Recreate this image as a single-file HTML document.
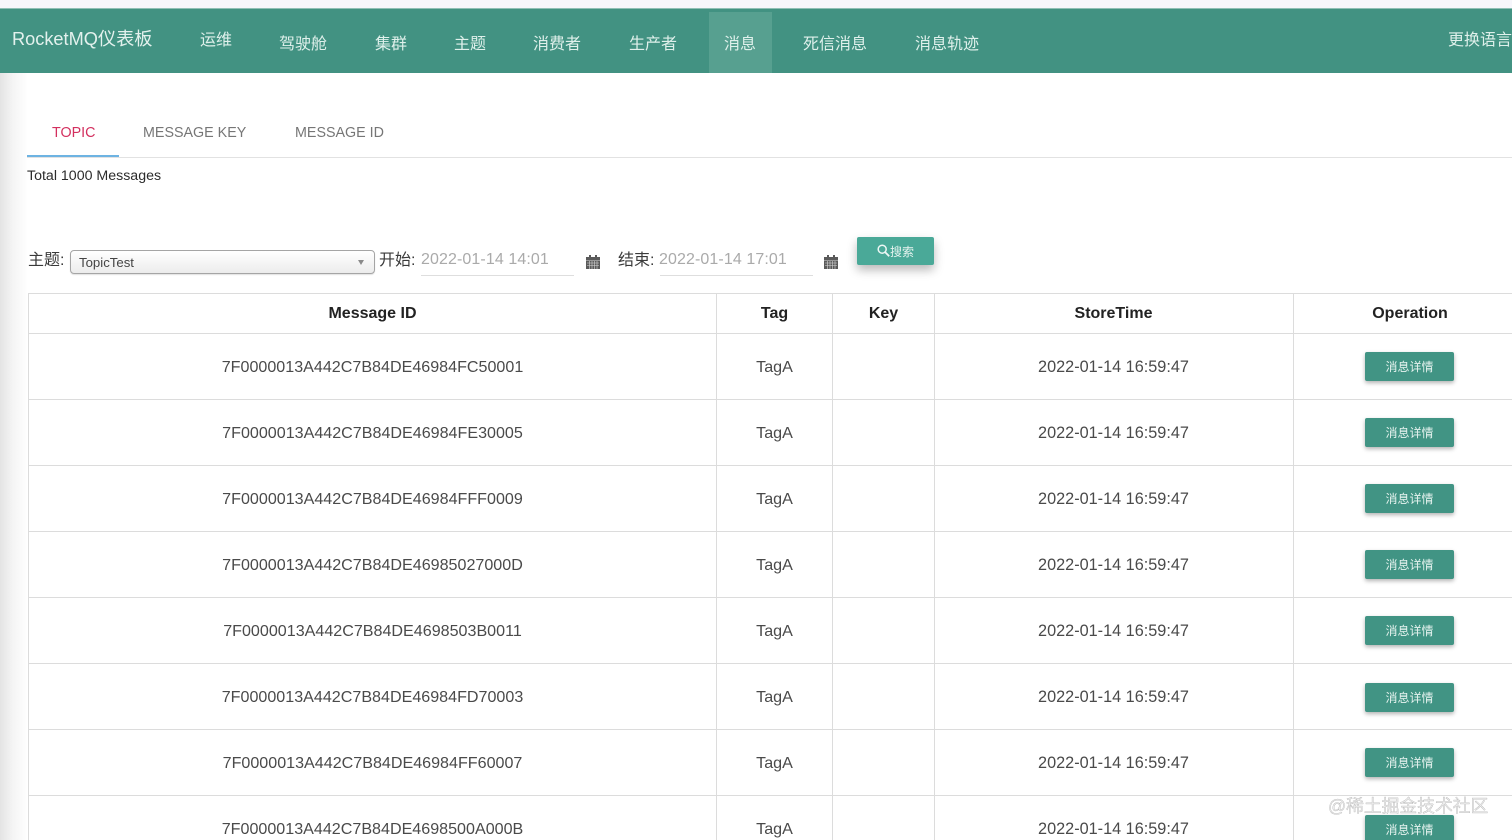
<!DOCTYPE html>
<html lang="zh">
<head>
<meta charset="utf-8">
<title>RocketMQ</title>
<style>
*{box-sizing:border-box}
html,body{margin:0;padding:0;width:1512px;height:840px;overflow:hidden;background:#fff}
body{font-family:"Liberation Sans","Noto Sans CJK SC",sans-serif;color:#333;position:relative}
.a{position:absolute;white-space:nowrap}
.c{position:absolute;white-space:nowrap;transform:translate(-50%,-50%);line-height:1}
.nav{font-size:16px;color:#dff0eb;line-height:1;transform:translateY(-50%)}
.h{font-size:16px;font-weight:bold;color:#222}
.t{font-size:16.1px;color:#4a4a4a}
.d{font-size:16.25px;color:#4a4a4a}
.hl{position:absolute;left:28px;width:1484px;height:1px;background:#dcdcdc}
.vl{position:absolute;top:293px;height:547px;width:1px;background:#dcdcdc}
.b{position:absolute;left:1365px;width:89px;height:29px;background:#419484;border-radius:2px;color:#e6f3ef;font-size:12px;text-align:center;line-height:31px;box-shadow:0 2px 4px rgba(0,0,0,.3)}
.tab{font-size:14.3px;color:#767676;line-height:1}
</style>
</head>
<body>
<div class="a" style="left:0;top:0;width:1512px;height:8px;background:#f6f6fb"></div>
<div class="a" style="left:0;top:8px;width:1512px;height:65px;background:#429282;border-top:1px solid #8fbfb5"></div>
<div class="a" style="left:709px;top:12px;width:63px;height:61px;background:#57a090"></div>

<div class="a" style="left:12px;top:28px;font-size:18.2px;line-height:22px;color:#e3f1ed">RocketMQ仪表板</div>
<div class="a nav" style="left:200px;top:41px">运维</div>
<div class="a nav" style="left:279px;top:45px">驾驶舱</div>
<div class="a nav" style="left:375px;top:45px">集群</div>
<div class="a nav" style="left:454px;top:45px">主题</div>
<div class="a nav" style="left:533px;top:45px">消费者</div>
<div class="a nav" style="left:629px;top:45px">生产者</div>
<div class="a nav" style="left:724px;top:45px">消息</div>
<div class="a nav" style="left:803px;top:45px">死信消息</div>
<div class="a nav" style="left:915px;top:45px">消息轨迹</div>
<div class="a nav" style="left:1448px;top:41px">更换语言</div>

<div class="a" style="left:0;top:73px;width:28px;height:767px;background:linear-gradient(90deg,#e4e4e4,#f4f4f4 45%,#fff)"></div>

<div class="a tab" style="left:52px;top:126px;color:#d3305f">TOPIC</div>
<div class="a tab" style="left:143px;top:126px">MESSAGE KEY</div>
<div class="a tab" style="left:295px;top:126px">MESSAGE ID</div>
<div class="a" style="left:27px;top:157px;width:1485px;height:1px;background:#e2e2e2"></div>
<div class="a" style="left:27px;top:155px;width:92px;height:2px;background:#6db3e2"></div>
<div class="a" style="left:27px;top:168px;font-size:14.2px;line-height:16px;color:#2b2b2b">Total 1000 Messages</div>

<div class="a" style="left:28px;top:252px;font-size:16px;line-height:18px;color:#3a3a3a">主题:</div>
<div class="a" style="left:70px;top:250px;width:305px;height:24px;border:1px solid #a5a5a5;border-radius:4px;background:linear-gradient(#fff,#ececec);font-size:13.2px;line-height:23px;padding-left:8px;color:#444;box-shadow:0 1px 1px rgba(0,0,0,.12)">TopicTest</div>
<div class="a" style="left:358px;top:260px;width:0;height:0;border-left:3px solid transparent;border-right:3px solid transparent;border-top:5px solid #8a8a8a"></div>
<div class="a" style="left:379px;top:252px;font-size:16px;line-height:18px;color:#3a3a3a">开始:</div>
<div class="a" style="left:421px;top:251px;font-size:16px;line-height:18px;color:#aaa;letter-spacing:.1px">2022-01-14 14:01</div>
<div class="a" style="left:421px;top:275px;width:153px;height:1px;background:#dedede"></div>
<svg class="a" style="left:586px;top:254px" width="14" height="15" viewBox="0 0 14 15"><path fill="#5a5a5a" d="M0 3h14v12H0zM3 1h2v3H3zM9 1h2v3H9z"/><path stroke="#d8d8d8" stroke-width=".6" d="M0 6.500h14M1 9h12M1 11.500h12M3.500 7v8M6 7v8M8.500 7v8M11 7v8"/></svg>
<div class="a" style="left:618px;top:252px;font-size:16px;line-height:18px;color:#3a3a3a">结束:</div>
<div class="a" style="left:659px;top:251px;font-size:16px;line-height:18px;color:#aaa;letter-spacing:.1px">2022-01-14 17:01</div>
<div class="a" style="left:660px;top:275px;width:153px;height:1px;background:#dedede"></div>
<svg class="a" style="left:824px;top:254px" width="14" height="15" viewBox="0 0 14 15"><path fill="#5a5a5a" d="M0 3h14v12H0zM3 1h2v3H3zM9 1h2v3H9z"/><path stroke="#d8d8d8" stroke-width=".6" d="M0 6.500h14M1 9h12M1 11.500h12M3.500 7v8M6 7v8M8.500 7v8M11 7v8"/></svg>
<div class="a" style="left:857px;top:237px;width:77px;height:28px;background:#4aa998;border-radius:2px;box-shadow:0 5px 10px rgba(0,0,0,.28)"></div>
<svg class="a" style="left:877px;top:244px" width="13" height="13" viewBox="0 0 13 13"><circle cx="5.200" cy="5.200" r="4" fill="none" stroke="#eef7f5" stroke-width="1.500"/><path d="M8.200 8.200l4 4" stroke="#eef7f5" stroke-width="1.800"/></svg>
<div class="a" style="left:890px;top:245px;font-size:12px;line-height:15px;color:#e6f3ef">搜索</div>

<div class="hl" style="top:293px"></div>
<div class="hl" style="top:333px"></div>
<div class="hl" style="top:399px"></div>
<div class="hl" style="top:465px"></div>
<div class="hl" style="top:531px"></div>
<div class="hl" style="top:597px"></div>
<div class="hl" style="top:663px"></div>
<div class="hl" style="top:729px"></div>
<div class="hl" style="top:795px"></div>
<div class="vl" style="left:28px"></div>
<div class="vl" style="left:716px"></div>
<div class="vl" style="left:832px"></div>
<div class="vl" style="left:934px"></div>
<div class="vl" style="left:1293px"></div>

<div class="c h" style="left:372.500px;top:314px">Message ID</div>
<div class="c h" style="left:774.500px;top:314px">Tag</div>
<div class="c h" style="left:883.500px;top:314px">Key</div>
<div class="c h" style="left:1113.500px;top:314px">StoreTime</div>
<div class="c h" style="left:1410px;top:314px">Operation</div>

<div class="c t" style="left:372.500px;top:367px">7F0000013A442C7B84DE46984FC50001</div>
<div class="c t" style="left:774.500px;top:367px">TagA</div>
<div class="c d" style="left:1113.500px;top:367px">2022-01-14 16:59:47</div>
<div class="b" style="top:352px">消息详情</div>

<div class="c t" style="left:372.500px;top:433px">7F0000013A442C7B84DE46984FE30005</div>
<div class="c t" style="left:774.500px;top:433px">TagA</div>
<div class="c d" style="left:1113.500px;top:433px">2022-01-14 16:59:47</div>
<div class="b" style="top:418px">消息详情</div>

<div class="c t" style="left:372.500px;top:499px">7F0000013A442C7B84DE46984FFF0009</div>
<div class="c t" style="left:774.500px;top:499px">TagA</div>
<div class="c d" style="left:1113.500px;top:499px">2022-01-14 16:59:47</div>
<div class="b" style="top:484px">消息详情</div>

<div class="c t" style="left:372.500px;top:565px">7F0000013A442C7B84DE46985027000D</div>
<div class="c t" style="left:774.500px;top:565px">TagA</div>
<div class="c d" style="left:1113.500px;top:565px">2022-01-14 16:59:47</div>
<div class="b" style="top:550px">消息详情</div>

<div class="c t" style="left:372.500px;top:631px">7F0000013A442C7B84DE4698503B0011</div>
<div class="c t" style="left:774.500px;top:631px">TagA</div>
<div class="c d" style="left:1113.500px;top:631px">2022-01-14 16:59:47</div>
<div class="b" style="top:616px">消息详情</div>

<div class="c t" style="left:372.500px;top:697px">7F0000013A442C7B84DE46984FD70003</div>
<div class="c t" style="left:774.500px;top:697px">TagA</div>
<div class="c d" style="left:1113.500px;top:697px">2022-01-14 16:59:47</div>
<div class="b" style="top:683px">消息详情</div>

<div class="c t" style="left:372.500px;top:763px">7F0000013A442C7B84DE46984FF60007</div>
<div class="c t" style="left:774.500px;top:763px">TagA</div>
<div class="c d" style="left:1113.500px;top:763px">2022-01-14 16:59:47</div>
<div class="b" style="top:748px">消息详情</div>

<div class="c t" style="left:372.500px;top:829px">7F0000013A442C7B84DE4698500A000B</div>
<div class="c t" style="left:774.500px;top:829px">TagA</div>
<div class="c d" style="left:1113.500px;top:829px">2022-01-14 16:59:47</div>
<div class="b" style="top:815px">消息详情</div>

<div class="a" style="left:1328px;top:796px;font-size:17.8px;line-height:21px;color:#ececec;-webkit-text-stroke:.25px #9c9c9c">@稀土掘金技术社区</div>
</body>
</html>
